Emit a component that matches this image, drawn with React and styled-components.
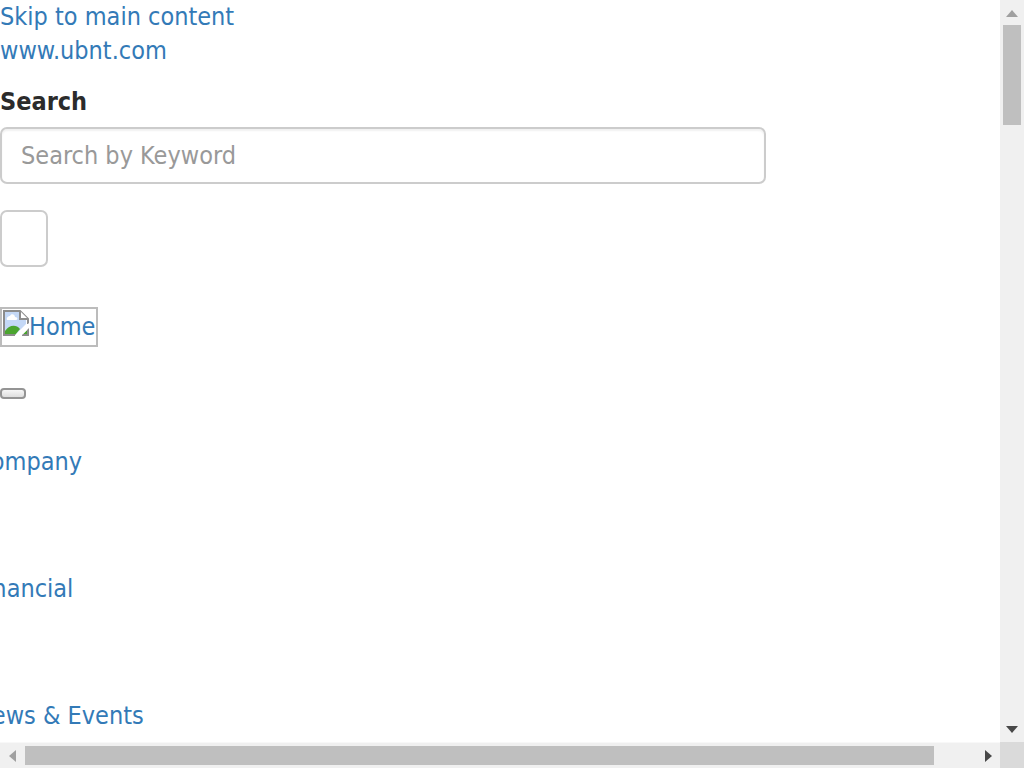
import React from "react";
import styled, { createGlobalStyle } from "styled-components";

const GlobalStyle = createGlobalStyle`
  *, *::before, *::after { box-sizing: border-box; }
  body {
    margin: 0;
    background: #fff;
    color: #333;
    font-family: "DejaVu Sans Condensed", "DejaVu Sans", sans-serif;
    font-size: 25px;
    line-height: 34px;
  }
`;

const Frame = styled.div`
  display: grid;
  grid-template-columns: minmax(0, 1fr) 24px;
  grid-template-rows: minmax(0, 1fr) 26px;
  height: 100vh;
`;

const Page = styled.div`
  display: flex;
  flex-direction: column;
  align-items: flex-start;
  overflow: hidden;
`;

const Link = styled.a`
  color: #337ab7;
  text-decoration: none;
`;

const SearchForm = styled.form`
  display: flex;
  flex-direction: column;
  align-items: flex-start;
  width: 100%;
  padding-top: 17px;
`;

const Label = styled.label`
  color: #2b2b2b;
  font-weight: bold;
  margin-bottom: 8px;
`;

const SearchInput = styled.input`
  width: 76.6%;
  height: 57px;
  margin-bottom: 26px;
  padding: 0 19px;
  border: 2px solid #ccc;
  border-radius: 7px;
  background: #fff;
  box-shadow: inset 0 2px 2px rgba(0, 0, 0, 0.06);
  color: #555;
  font: inherit;
  &::placeholder { color: #999; opacity: 1; }
`;

const SearchButton = styled.button`
  width: 48px;
  height: 57px;
  padding: 0;
  border: 2px solid #ccc;
  border-radius: 7px;
  background: #fff;
`;

const Logo = styled(Link)`
  display: flex;
  height: 40px;
  margin-top: 40px;
  padding: 1px;
  border: 2px solid #bcbcbc;
  svg { flex: none; }
`;

const MenuButton = styled.button`
  width: 26px;
  height: 11px;
  margin-top: 41px;
  padding: 0;
  border: 2px solid #949494;
  border-radius: 4px;
  background: linear-gradient(#f6f6f6, #dedede);
`;

const Nav = styled.ul`
  display: flex;
  flex-direction: column;
  gap: 93px;
  margin: 46px 0 0 -25px;
  padding: 0;
  list-style: none;
  white-space: nowrap;
`;

const Bar = styled.div`
  display: flex;
  flex-direction: ${(p) => (p.$vertical ? "column" : "row")};
  align-items: stretch;
  background: #f0f0f0;
  border-top: ${(p) => (p.$vertical ? "none" : "1px solid #f8f8f8")};
`;

const Arrow = styled.div`
  display: flex;
  flex: 0 0 25px;
  align-items: center;
  justify-content: center;
  color: ${(p) => (p.$dim ? "#a0a0a0" : "#484848")};
`;

const Track = styled.div`
  display: flex;
  flex: 1;
  flex-direction: inherit;
  padding: ${(p) => (p.$vertical ? "0 3px" : "3px 0")};
`;

const Thumb = styled.div`
  flex: 0 0 ${(p) => p.$size};
  background: #bfbfbf;
`;

const Corner = styled.div`
  background: #dadada;
`;

const triangles = {
  up: "M0 10L6 3L12 10Z",
  down: "M0 2L12 2L6 9Z",
  left: "M9 0L2 6L9 12Z",
  right: "M3 0L10 6L3 12Z",
};

function Triangle({ direction }) {
  return (
    <svg width="12" height="12" viewBox="0 0 12 12" aria-hidden="true">
      <path d={triangles[direction]} fill="currentColor" />
    </svg>
  );
}

function Scrollbar({ vertical, size }) {
  return (
    <Bar $vertical={vertical} aria-hidden="true">
      <Arrow $dim><Triangle direction={vertical ? "up" : "left"} /></Arrow>
      <Track $vertical={vertical}><Thumb $size={size} /></Track>
      <Arrow><Triangle direction={vertical ? "down" : "right"} /></Arrow>
    </Bar>
  );
}

function PictureIcon() {
  return (
    <svg width="26" height="28" viewBox="0 0 26 28" aria-hidden="true">
      <path d="M1 1H17L24 9V26H1Z" fill="#fff" />
      <path d="M2 2H16V10H23V14L12 25H2Z" fill="#c4d8f6" />
      <path d="M4 10C3 7 6 6 7 6C8 3 12 4 12 7C15 7 15 10 13 10Z" fill="#fff" />
      <path d="M2 24V21C6 15 13 14 17 19L12 25H2Z" fill="#4ba52f" />
      <path d="M19 25L24 20V25Z" fill="#4ba52f" />
      <path d="M12 25H1V1H17L25 9V14" fill="none" stroke="#8c8c8c" strokeWidth="2" />
      <path d="M17 1V9H25" fill="#fff" stroke="#8c8c8c" strokeWidth="2" />
      <path d="M25 18V25H19" fill="none" stroke="#8c8c8c" strokeWidth="2" />
      <path d="M12 26L26 13V18L18 26Z" fill="#fff" />
    </svg>
  );
}

const sections = ["Company", "Financial", "News & Events"];

export default function App() {
  return (
    <>
      <GlobalStyle />
      <Frame>
        <Page>
          <Link href="#main-content">Skip to main content</Link>
          <Link href="#home">www.ubnt.com</Link>
          <SearchForm onSubmit={(e) => e.preventDefault()}>
            <Label htmlFor="keyword">Search</Label>
            <SearchInput id="keyword" type="text" placeholder="Search by Keyword" />
            <SearchButton type="submit" aria-label="Submit search" />
          </SearchForm>
          <Logo href="#home"><PictureIcon />Home</Logo>
          <MenuButton type="button" aria-label="Toggle navigation" />
          <nav>
            <Nav>
              {sections.map((name) => (
                <li key={name}><Link href="#section">{name}</Link></li>
              ))}
            </Nav>
          </nav>
        </Page>
        <Scrollbar vertical size="14.5%" />
        <Scrollbar size="95.7%" />
        <Corner />
      </Frame>
    </>
  );
}
